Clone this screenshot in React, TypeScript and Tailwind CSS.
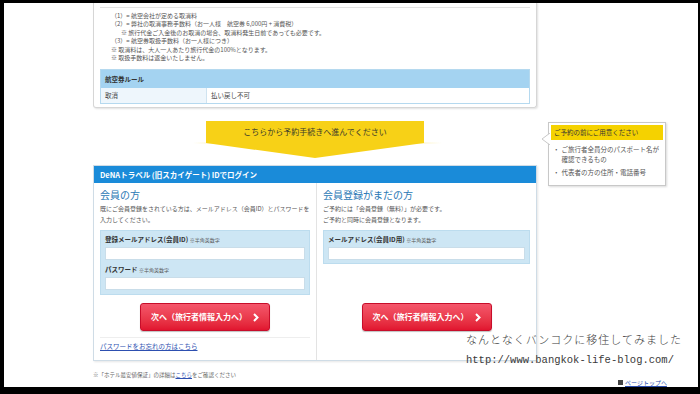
import React from 'react';

const jp = { fontFamily: '"Noto Sans CJK JP", "Noto Sans", sans-serif' };

const RedButton = () => (
  <button className="flex items-center justify-center gap-[6px] w-[130px] h-[28px] rounded-[3px] border border-[#c70d2a] bg-gradient-to-b from-[#f4566b] to-[#e1142f] text-white text-[8px] font-bold shadow-[0_1px_1px_rgba(0,0,0,0.25)]">
    <span>次へ（旅行者情報入力へ）</span>
    <svg width="6" height="9" viewBox="0 0 6 9">
      <path d="M1 1 L4.5 4.5 L1 8" stroke="white" strokeWidth="2" fill="none" />
    </svg>
  </button>
);

const Field = ({ label }: { label: string }) => (
  <div className="flex flex-col">
    <div className="text-[6.5px] font-bold text-[#333] leading-[10px]">
      {label} <span className="font-normal text-[5px] text-[#555]">※半角英数字</span>
    </div>
    <div className="mt-[2px] h-[13px] bg-white border border-[#c9dde9]" />
  </div>
);

const App = () => {
  return (
    <div className="w-[700px] h-[394px] bg-black pt-[3px] pl-[4px] pr-[2px] pb-[7px]" style={jp}>
      <div className="relative w-full h-full bg-white overflow-hidden">
        <div className="ml-[89px] w-[444px] flex flex-col">
          {/* previous card */}
          <div className="border-x border-b border-[#d6d6d6] rounded-b-[3px] shadow-[1px_1px_2px_rgba(0,0,0,0.12)] px-[6px] pb-[3px] -mt-[1px]">
            <div className="border-t border-[#e2e2e2] mt-[5px] pt-[4px] pl-[11px] text-[6px] leading-[8.4px] text-[#555]">
              <div>（1）= 航空会社が定める取消料</div>
              <div>（2）= 弊社の取消事務手数料（お一人様　航空券 6,000円 + 消費税）</div>
              <div className="pl-[10px]">※ 旅行代金ご入金後のお取消の場合、取消料発生日前であっても必要です。</div>
              <div>（3）= 航空券取扱手数料（お一人様につき）</div>
              <div>※ 取消料は、大人一人あたり旅行代金の100%となります。</div>
              <div>※ 取扱手数料は返金いたしません。</div>
            </div>
            <div className="mt-[7px] border border-[#b5d9ef]">
              <div className="h-[18px] bg-[#a4d3f1] flex items-center px-[4px] text-[6.5px] font-bold text-[#333]">航空券ルール</div>
              <div className="h-[15px] flex text-[6.5px] text-[#444]">
                <div className="w-[106px] flex items-center px-[4px] bg-[#eef6fc] border-r border-[#cfe3f0]">取消</div>
                <div className="flex-1 flex items-center px-[4px]">払い戻し不可</div>
              </div>
            </div>
          </div>

          {/* yellow arrow banner */}
          <div className="relative mt-[13px] h-[37px] flex justify-center">
            <div className="absolute left-[100px] right-[95px] top-[21px] h-[2px] bg-gradient-to-r from-transparent via-[#f6d21a] to-transparent" />
            <div className="relative w-[218px] h-[37px]">
              <svg className="absolute inset-0" width="218" height="37" viewBox="0 0 218 37">
                <polygon points="0,0 218,0 218,22 109,37 0,22" fill="#f7d117" />
              </svg>
              <div className="relative pt-[5px] text-center text-[8px] text-[#3a3a2a]">こちらから予約手続きへ進んでください</div>
            </div>
          </div>

          {/* login box */}
          <div className="mt-[7px] border border-[#cfdce6] shadow-[1px_1px_2px_rgba(0,0,0,0.1)]">
            <div className="h-[17px] bg-[#1a8bd9] flex items-center px-[6px] text-white text-[7.5px] font-bold">
              DeNAトラベル (旧スカイゲート) IDでログイン
            </div>
            <div className="flex h-[177px]">
              <div className="w-[223px] border-r border-[#e3e3e3] px-[6px] pt-[5px] flex flex-col">
                <div className="text-[10px] text-[#2a78b5] leading-[13px]">会員の方</div>
                <div className="mt-[2px] text-[6px] leading-[11px] text-[#555]">
                  既にご会員登録をされている方は、メールアドレス（会員ID）とパスワードを入力してください。
                </div>
                <div className="mt-[5px] bg-[#cde6f4] border border-[#bcdcee] px-[4px] pt-[3px] pb-[4px] flex flex-col gap-[4px]">
                  <Field label="登録メールアドレス(会員ID)" />
                  <Field label="パスワード" />
                </div>
                <div className="mt-[8px] flex justify-center">
                  <RedButton />
                </div>
                <div className="mt-[6px] border-t border-[#eeeeee]" />
                <div className="mt-[4px] text-[6.5px] text-[#2d4fb0] underline">パスワードをお忘れの方はこちら</div>
              </div>
              <div className="flex-1 px-[6px] pt-[5px] flex flex-col">
                <div className="text-[10px] text-[#2a78b5] leading-[13px]">会員登録がまだの方</div>
                <div className="mt-[2px] text-[6px] leading-[11px] text-[#555]">
                  <div>ご予約には「会員登録（無料）」が必要です。</div>
                  <div>ご予約と同時に会員登録となります。</div>
                </div>
                <div className="mt-[5px] bg-[#cde6f4] border border-[#bcdcee] px-[4px] pt-[3px] pb-[3px]">
                  <Field label="メールアドレス(会員ID用)" />
                </div>
                <div className="mt-[39px] flex justify-center">
                  <RedButton />
                </div>
              </div>
            </div>
          </div>

          <div className="mt-[10px] text-[5.5px] text-[#666]">
            ※「ホテル最安値保証」の詳細は<span className="text-[#2d4fb0] underline">こちら</span>をご確認ください
          </div>
        </div>

        {/* callout */}
        <div className="absolute left-[544px] top-[119px] w-[118px] border border-[#c8c8c8] bg-white shadow-[1px_1px_2px_rgba(0,0,0,0.15)] p-[2px]">
          <svg className="absolute -left-[7px] top-[10px]" width="8" height="12" viewBox="0 0 8 12">
            <polygon points="8,0 0,6 8,12" fill="white" />
            <polyline points="8,0 0,6 8,12" fill="none" stroke="#c8c8c8" strokeWidth="1" />
          </svg>
          <div className="h-[15px] bg-[#f5d200] flex items-center px-[3px] text-[6.5px] text-[#333]">ご予約の前にご用意ください</div>
          <div className="px-[2px] pt-[4px] pb-[6px] text-[6.5px] leading-[10px] text-[#555]">
            <div className="flex gap-[2px]"><span>・</span><span>ご旅行者全員分のパスポート名が確認できるもの</span></div>
            <div className="flex gap-[2px] mt-[3px]"><span>・</span><span>代表者の方の住所・電話番号</span></div>
          </div>
        </div>

        {/* blog watermark */}
        <div className="absolute left-[462px] top-[328px] text-[#3a3a3a] whitespace-nowrap">
          <div className="text-[11px] tracking-[1px] font-light">なんとなくバンコクに移住してみました</div>
          <div className="mt-[5px] text-[10.5px]" style={{ fontFamily: '"Liberation Mono", monospace' }}>http://www.bangkok-life-blog.com/</div>
        </div>

        <div className="absolute left-[614px] top-[376px] flex items-center gap-[2px] text-[6px] leading-[7px] text-[#2d4fb0] whitespace-nowrap">
          <span className="w-[5px] h-[5px] bg-[#444] inline-block" />
          <span className="underline">ページトップへ</span>
        </div>
      </div>
    </div>
  );
};

export default App;
